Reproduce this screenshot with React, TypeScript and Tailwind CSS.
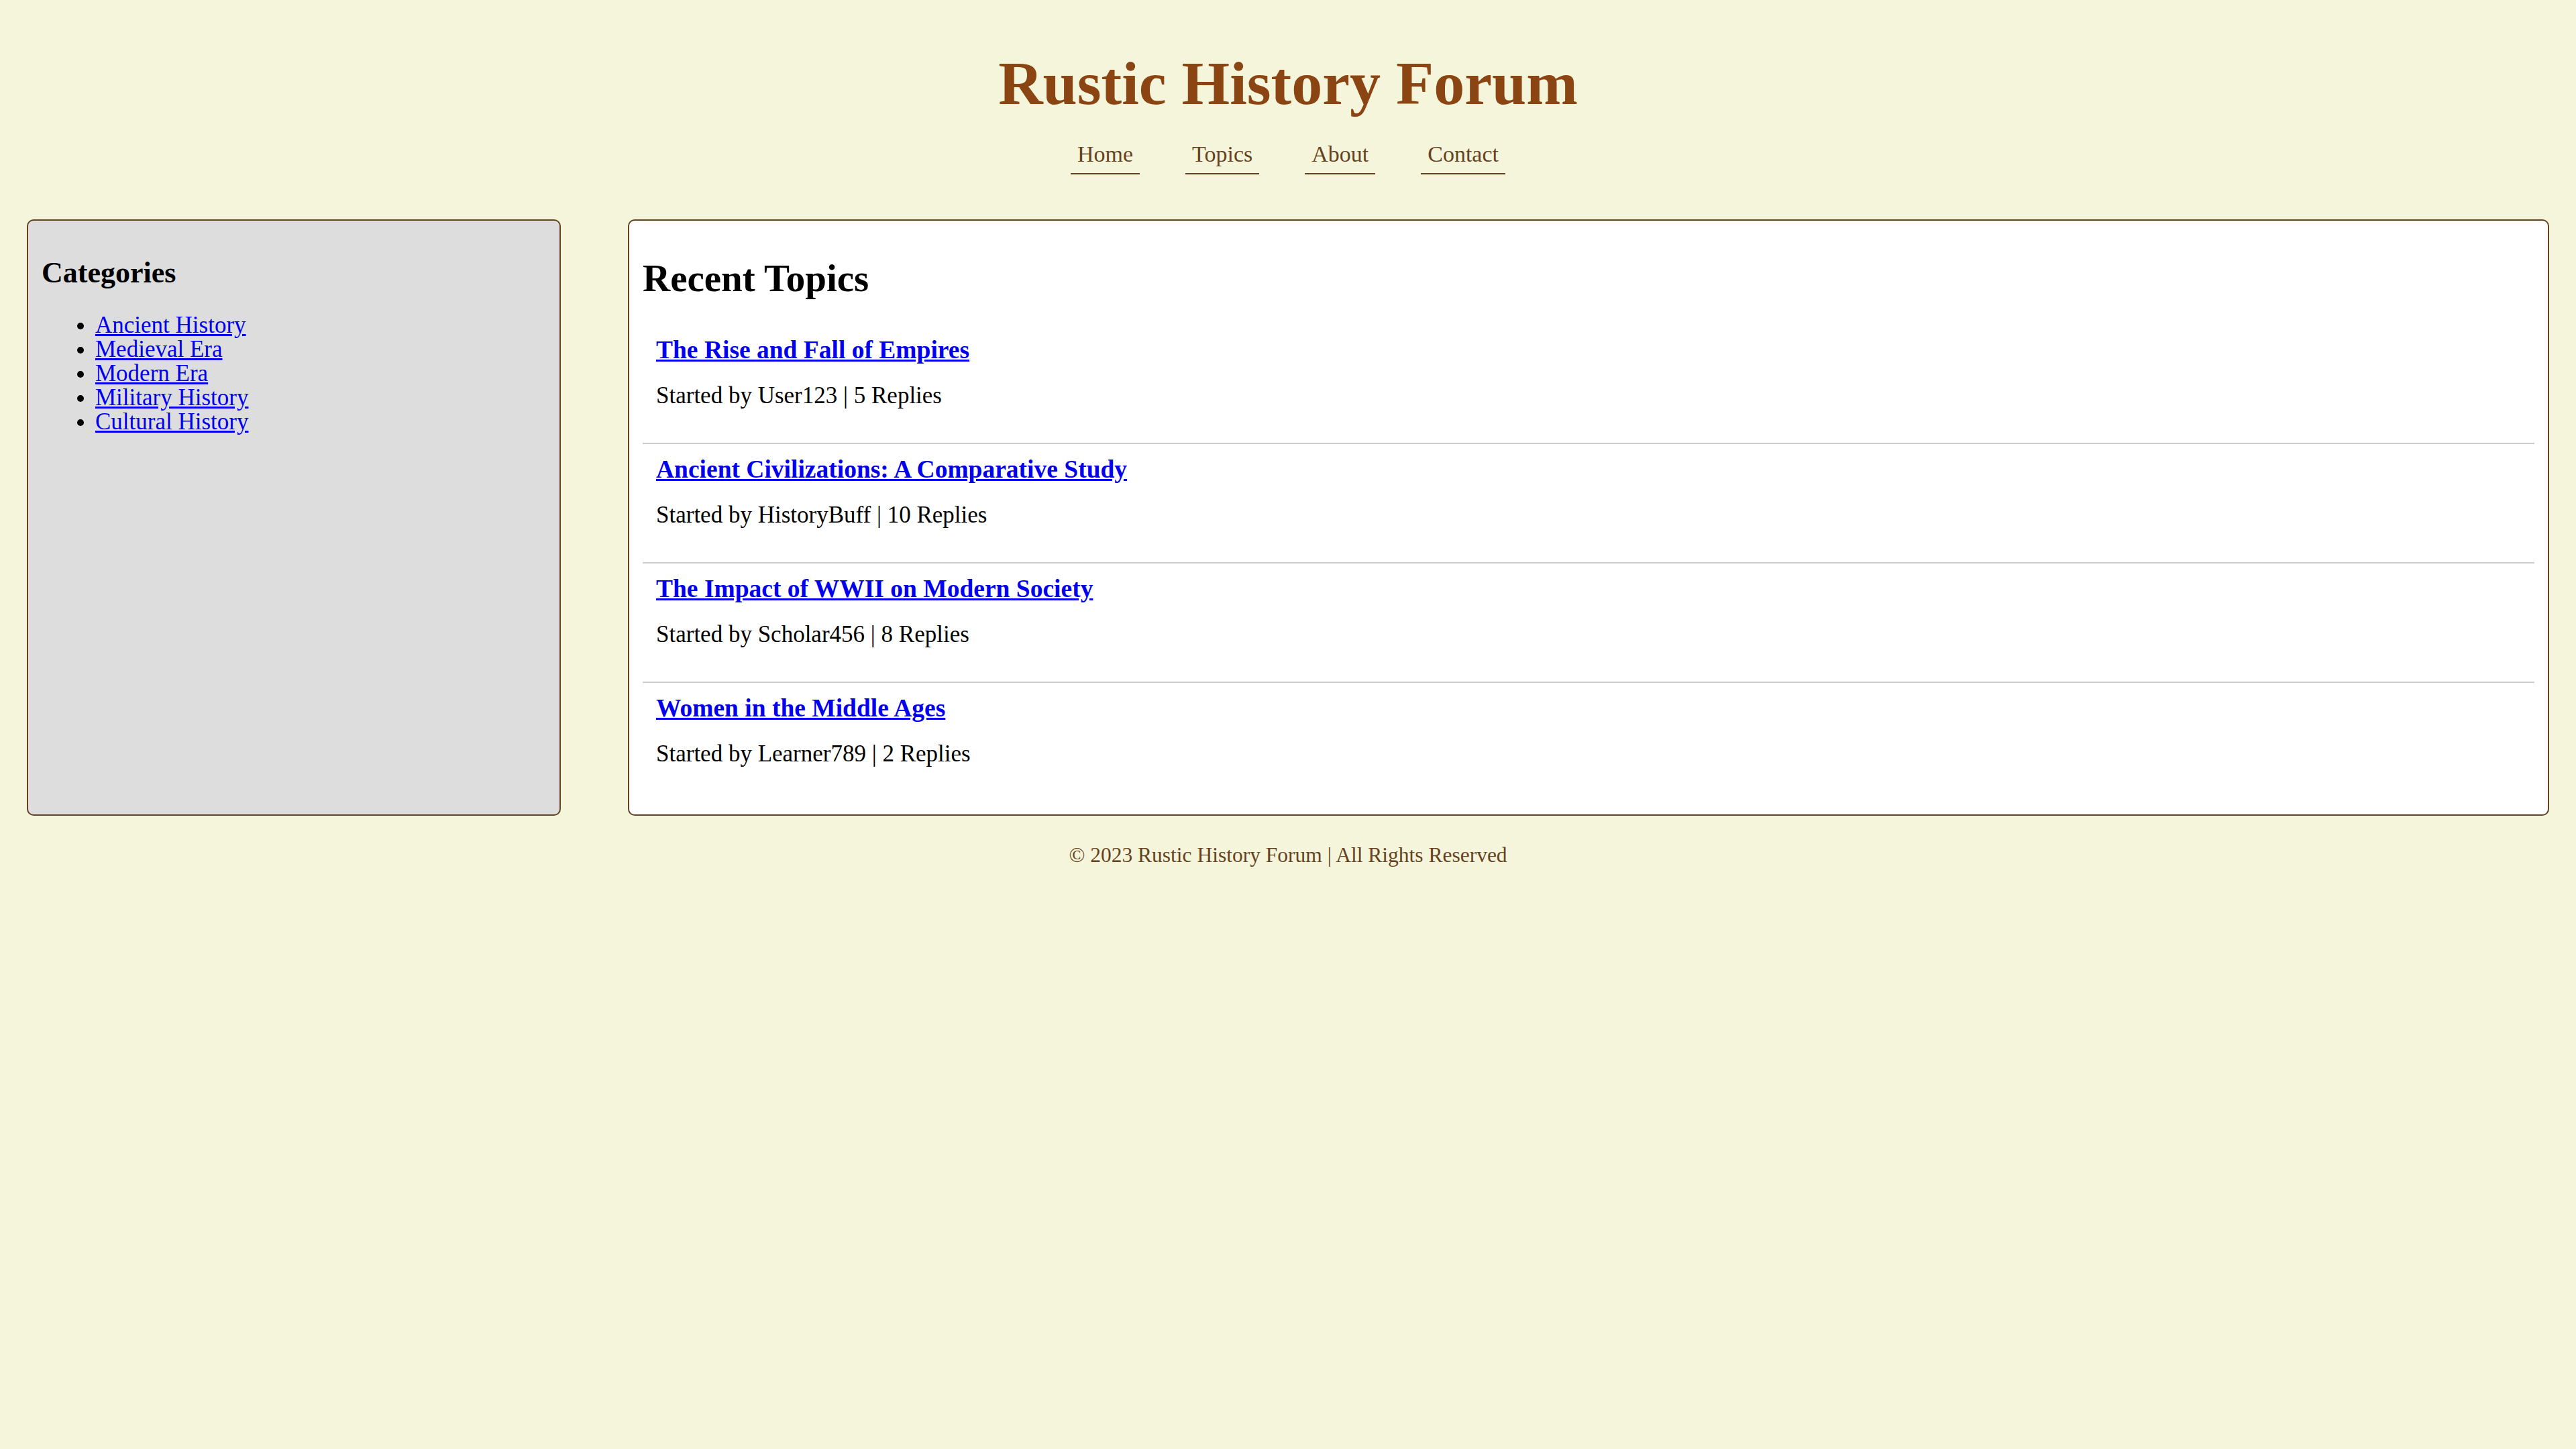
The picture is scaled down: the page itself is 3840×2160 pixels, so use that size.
const NAV = ['Home', 'Topics', 'About', 'Contact'];

const CATEGORIES = ['Ancient History', 'Medieval Era', 'Modern Era', 'Military History', 'Cultural History'];

const TOPICS = [
  { title: 'The Rise and Fall of Empires', author: 'User123', replies: 5 },
  { title: 'Ancient Civilizations: A Comparative Study', author: 'HistoryBuff', replies: 10 },
  { title: 'The Impact of WWII on Modern Society', author: 'Scholar456', replies: 8 },
  { title: 'Women in the Middle Ages', author: 'Learner789', replies: 2 },
];

export default function App() {
  return (
    <div className="min-h-screen bg-[#f5f5dc] font-['Liberation_Serif',Georgia,serif] text-black">
      {/* header: title + underlined nav */}
      <header className="pt-[79px] text-center">
        <h1 className="text-[92px] font-bold leading-[90px] text-[#8b4513]">Rustic History Forum</h1>
        <nav className="mt-[33px] flex justify-center gap-[68px]">
          {NAV.map((n) => (
            <a
              key={n}
              href="#"
              className="border-b-2 border-[#654321] p-[10px] text-[34px] leading-[36px] text-[#654321]"
            >
              {n}
            </a>
          ))}
        </nav>
      </header>

      <div className="mt-[67px] flex items-stretch justify-between px-[40px]">
        <aside className="w-[796px] rounded-[10px] border-2 border-[#654321] bg-[#dddddd] p-[20px]">
          <h3 className="mt-[37px] text-[44px] font-bold leading-[42px]">Categories</h3>
          <ul className="mt-[39px] list-disc pl-[80px] text-[35px] leading-[36px]">
            {CATEGORIES.map((c) => (
              <li key={c}>
                <a href="#" className="text-[#0000ee] underline">
                  {c}
                </a>
              </li>
            ))}
          </ul>
        </aside>

        <main className="w-[2864px] rounded-[10px] border-2 border-[#654321] bg-white p-[20px]">
          <h2 className="mt-[39px] mb-[42px] text-[57px] font-bold leading-[54px]">Recent Topics</h2>
          {TOPICS.map((t, i) => (
            <div
              key={t.title}
              className={
                'p-[20px] ' + (i < TOPICS.length - 1 ? 'border-b-2 border-[#cccccc]' : 'pb-[20px]')
              }
            >
              <a href="#" className="block text-[37.5px] font-bold leading-[36px] text-[#0000ee] underline">
                {t.title}
              </a>
              <p className="my-[32px] text-[35px] leading-[36px]">
                Started by {t.author} | {t.replies} Replies
              </p>
            </div>
          ))}
        </main>
      </div>

      <footer className="pt-[42px] text-center text-[31.5px] leading-[34px] text-[#654321]">
        © 2023 Rustic History Forum | All Rights Reserved
      </footer>
    </div>
  );
}
